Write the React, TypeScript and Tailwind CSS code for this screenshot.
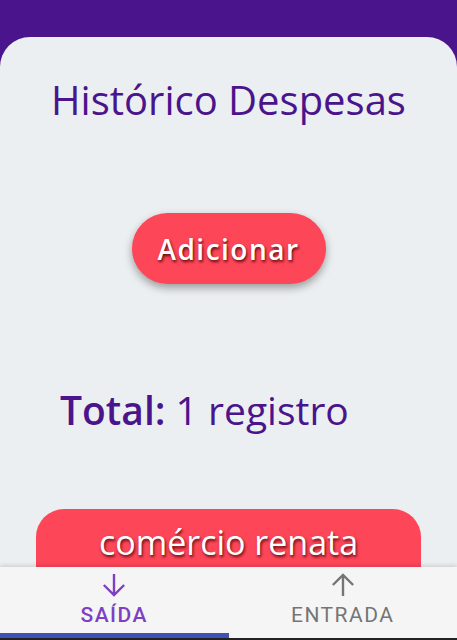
import React from 'react';

const ArrowDown = ({ className }: { className?: string }) => (
  <svg viewBox="0 0 26 26" className={className} fill="none" stroke="currentColor" strokeWidth={2.6}>
    <path d="M13 1v23M2 13l11 11 11-11" />
  </svg>
);

const ArrowUp = ({ className }: { className?: string }) => (
  <svg viewBox="0 0 26 26" className={className} fill="none" stroke="currentColor" strokeWidth={2.6}>
    <path d="M13 25V2M2 13L13 2l11 11" />
  </svg>
);

const records = [{ id: 1, name: 'comércio renata' }];

export default function App() {
  return (
    <div className="relative h-[640px] w-full overflow-hidden bg-[#4a148c] font-['Open_Sans',sans-serif]">
      <div className="mt-[37px] h-[603px] rounded-t-[30px] bg-[#eceff1] pt-[39px]">
        <h1 className="text-center text-[40px] leading-[48px] text-[#4a148c]">Histórico Despesas</h1>

        <div className="mt-[89px] flex justify-center">
          <button className="h-[71px] w-[194px] rounded-full bg-[#fe4659] text-[28px] font-semibold tracking-[1.5px] text-white shadow-[0_4px_8px_rgba(0,0,0,0.35)] [text-shadow:1px_2px_3px_rgba(80,0,0,0.9)]">
            Adicionar
          </button>
        </div>

        <p className="mt-[102px] pl-[60px] text-[39px] leading-[48px] text-[#4a148c]">
          <span className="font-semibold">Total:</span> {records.length} registro
        </p>

        <div className="mt-[75px] px-[36px]">
          {records.map((r) => (
            <div
              key={r.id}
              className="h-[90px] rounded-[28px] bg-[#fe4659] pt-[13px] text-center text-[34px] leading-[40px] text-white [text-shadow:1px_2px_3px_rgba(80,0,0,0.9)]"
            >
              {r.name}
            </div>
          ))}
        </div>
      </div>

      <nav className="absolute bottom-0 left-0 flex h-[73px] w-full bg-[#f5f5f5] font-['Roboto',sans-serif] shadow-[0_-2px_4px_rgba(0,0,0,0.12)]">
        <div className="relative flex flex-1 flex-col items-center pt-[6px] text-[#7e3fc4]">
          <ArrowDown className="h-[24px] w-[24px]" />
          <span className="mt-[6px] text-[21px] font-medium leading-[24px] tracking-[1.5px]">SAÍDA</span>
          <div className="absolute bottom-[2px] left-0 h-[5px] w-full bg-[#3f51b5]" />
        </div>
        <div className="flex flex-1 flex-col items-center pt-[6px] text-[#757575]">
          <ArrowUp className="h-[24px] w-[24px]" />
          <span className="mt-[6px] text-[21px] leading-[24px] tracking-[1.5px]">ENTRADA</span>
        </div>
        <div className="absolute bottom-0 left-0 h-[2px] w-full bg-[#222]" />
      </nav>
    </div>
  );
}
